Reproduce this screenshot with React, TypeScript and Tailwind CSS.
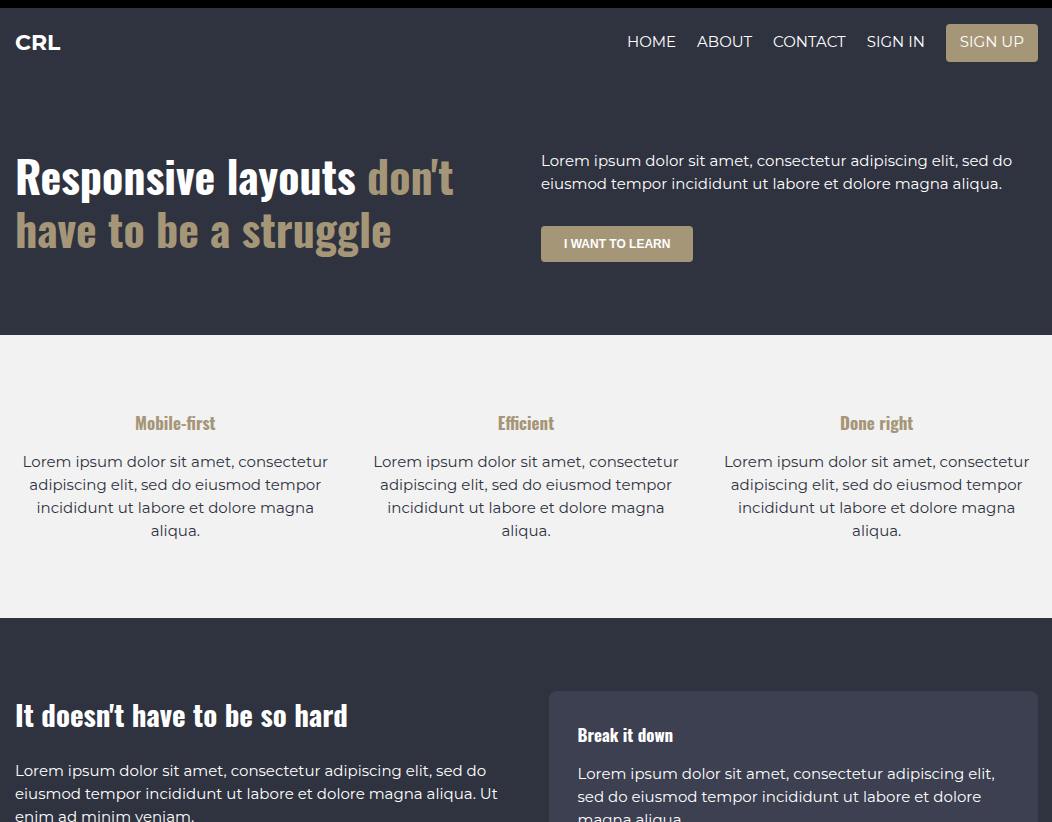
const navLinks = ["Home", "About", "Contact", "Sign in"];

const features = ["Mobile-first", "Efficient", "Done right"];

const lorem =
  "Lorem ipsum dolor sit amet, consectetur adipiscing elit, sed do eiusmod tempor incididunt ut labore et dolore magna aliqua.";

const headingFont = "font-['Oswald','Roboto_Condensed',sans-serif] font-bold";

function Header() {
  return (
    <header className="flex items-start justify-between pt-[16px] pr-[14px] pl-[15px]">
      <a href="#home" className="text-[22px] leading-[38px] font-bold">
        CRL
      </a>
      <nav className="flex items-start gap-[21px] leading-[36px] uppercase">
        {navLinks.map((label) => (
          <a key={label} href="#nav">
            {label}
          </a>
        ))}
        <a href="#signup" className="rounded-[4px] bg-[#a69678] px-[14px] pb-[2px]">
          Sign up
        </a>
      </nav>
    </header>
  );
}

function Hero() {
  return (
    <section className="grid grid-cols-2 pt-[87px] pb-[73px]">
      <h1 className={`${headingFont} px-[15px] text-[44px] leading-[53px]`}>
        Responsive layouts <span className="text-[#a69678]">don't have to be a struggle</span>
      </h1>
      <div className="px-[15px]">
        <p>{lorem}</p>
        <button
          type="button"
          className="mt-[31px] h-[36px] rounded-[4px] bg-[#a69678] px-[23px] font-['Liberation_Sans',Arial,sans-serif] text-[12px] font-bold uppercase"
        >
          I want to learn
        </button>
      </div>
    </section>
  );
}

function Features() {
  return (
    <section className="grid grid-cols-3 bg-[#f2f2f2] pt-[73px] pb-[76px] text-center text-[#2f333f]">
      {features.map((title) => (
        <div key={title} className="px-[22px]">
          <h2 className={`${headingFont} mb-[12px] text-[17px] leading-[30px] text-[#a69678]`}>{title}</h2>
          <p>{lorem}</p>
        </div>
      ))}
    </section>
  );
}

function Details() {
  return (
    <section className="grid grid-cols-2 gap-[44px] py-[73px] pr-[14px] pl-[15px]">
      <div>
        <h2 className={`${headingFont} mb-[23px] text-[29px] leading-[45px]`}>It doesn't have to be so hard</h2>
        <p>{lorem} Ut enim ad minim veniam.</p>
      </div>
      <div className="rounded-[8px] bg-[#3c4050] p-[29px]">
        <h3 className={`${headingFont} mb-[12px] text-[17px] leading-[30px]`}>Break it down</h3>
        <p>{lorem}</p>
      </div>
    </section>
  );
}

export default function App() {
  return (
    <div className="min-h-screen border-t-8 border-black bg-[#2f333f] font-['Montserrat','Inter',sans-serif] text-[15px] leading-[23px] text-white">
      <Header />
      <main>
        <Hero />
        <Features />
        <Details />
      </main>
    </div>
  );
}
